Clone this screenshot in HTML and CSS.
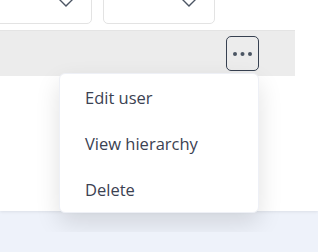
FILE: index.html
```html
<!DOCTYPE html>
<html lang="en">
<head>
    <meta charset="UTF-8">
    <meta name="viewport" content="width=device-width, initial-scale=1.0">
    <title>Users</title>
    <link rel="stylesheet" href="styles.css">
</head>
<body>
    <div class="card">
        <div class="filters">
            <div class="select">
                <svg class="chevron" width="16" height="9" viewBox="0 0 16 9"><path d="M1 1l7 7 7-7" fill="none" stroke="#4b5563" stroke-width="1.4"/></svg>
            </div>
            <div class="select">
                <svg class="chevron" width="16" height="9" viewBox="0 0 16 9"><path d="M1 1l7 7 7-7" fill="none" stroke="#4b5563" stroke-width="1.4"/></svg>
            </div>
        </div>

        <div class="table-head">
            <div class="actions">
                <button class="more-btn" aria-label="More actions">
                    <svg width="19" height="4" viewBox="0 0 19 4"><circle cx="2" cy="2" r="2"/><circle cx="9.5" cy="2" r="2"/><circle cx="17" cy="2" r="2"/></svg>
                </button>
                <!-- dropdown opened from the row actions button -->
                <ul class="menu">
                    <li>Edit user</li>
                    <li>View hierarchy</li>
                    <li>Delete</li>
                </ul>
            </div>
        </div>
    </div>
    <div class="footer"></div>
</body>
</html>
```

FILE: styles.css
```css
body {
    margin: 0;
    font-family: "Open Sans", sans-serif;
    background-color: #eef2fa;
    overflow: hidden;
}
.card {
    background-color: #fff;
    height: 231px;
    box-shadow: 0 1px 3px rgba(0,0,0,0.08);
}
.filters {
    display: flex;
    gap: 11px;
    margin-top: -20px;
    margin-left: -20px;
}
.select {
    width: 112px;
    height: 44px;
    box-sizing: border-box;
    border: 1px solid #e3e3e3;
    border-radius: 5px;
    display: flex;
    align-items: center;
    justify-content: flex-end;
    padding-right: 17px;
}
.table-head {
    margin-top: 6px;
    width: 295px;
    height: 46px;
    background-color: #ececec;
    border-top: 1px solid #e4e4e4;
    box-sizing: border-box;
    display: flex;
    align-items: center;
    justify-content: flex-end;
    padding-right: 36px;
}
.actions {
    position: relative;
}
.more-btn {
    width: 33px;
    height: 35px;
    display: flex;
    align-items: center;
    justify-content: center;
    padding: 0;
    border: 1px solid #374151;
    border-radius: 5px;
    background: transparent;
    fill: #4b5563;
    cursor: pointer;
}
.menu {
    position: absolute;
    top: 37px;
    right: 0;
    width: 198px;
    margin: 0;
    padding: 0;
    list-style: none;
    background-color: #fff;
    border: 1px solid #eef0f6;
    border-radius: 6px;
    box-shadow: 0 10px 24px rgba(0,0,0,0.12);
}
.menu li {
    height: 46px;
    display: flex;
    align-items: center;
    padding-left: 25px;
    padding-top: 1px;
    box-sizing: border-box;
    font-size: 16.5px;
    color: #3b4252;
}
.footer {
    height: 21px;
}
```
